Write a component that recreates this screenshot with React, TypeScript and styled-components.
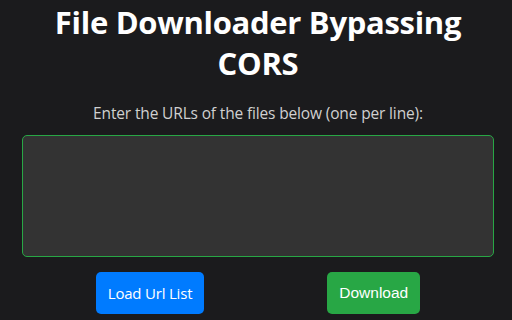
import React, { useState } from 'react';
import styled, { createGlobalStyle } from 'styled-components';

const GlobalStyle = createGlobalStyle`
  html, body {
    margin: 0;
    padding: 0;
    background-color: #1b1b1d;
  }
  body {
    font-family: "Open Sans", "Noto Sans", sans-serif;
    color: #fff;
  }
`;

const Page = styled.div`
  display: flex;
  flex-direction: column;
  align-items: center;
  padding: 0 18px 0 22px;
`;

const Title = styled.h1`
  margin: 2px 0 0;
  font-size: 31px;
  line-height: 41px;
  letter-spacing: -0.3px;
  font-weight: 700;
  text-align: center;
  color: #fff;
`;

const Hint = styled.p`
  margin: 18px 0 0;
  font-size: 15.5px;
  line-height: 22px;
  letter-spacing: -0.15px;
  color: #d0d0d0;
`;

const UrlBox = styled.textarea`
  box-sizing: border-box;
  width: 100%;
  height: 122px;
  margin-top: 11px;
  padding: 8px;
  background-color: #333333;
  color: #fff;
  border: 1px solid #28a745;
  border-radius: 5px;
  resize: none;
  outline: none;
  font-family: inherit;
  font-size: 14px;
`;

const ButtonRow = styled.div`
  display: flex;
  justify-content: center;
  gap: 123px;
  margin-top: 15px;
`;

const ActionButton = styled.button<{ tone: 'blue' | 'green' }>`
  height: 42px;
  padding: 0 12px;
  border: 0;
  border-radius: 5px;
  background-color: ${props => (props.tone === 'blue' ? '#007bff' : '#28a745')};
  color: #fff;
  font-size: ${props => (props.tone === 'blue' ? '15px' : '15.5px')};
  letter-spacing: ${props => (props.tone === 'blue' ? '-0.2px' : '0')};
  font-family: ${props => (props.tone === 'blue' ? '"Open Sans", sans-serif' : '"Liberation Sans", Arial, sans-serif')};
  cursor: pointer;
`;

const App: React.FC = () => {
  const [urls, setUrls] = useState<string>('');

  return (
    <>
      <GlobalStyle />
      <Page>
        <Title>File Downloader Bypassing CORS</Title>
        <Hint>Enter the URLs of the files below (one per line):</Hint>
        <UrlBox value={urls} onChange={e => setUrls(e.target.value)} />
        <ButtonRow>
          <ActionButton type="button" tone="blue">Load Url List</ActionButton>
          <ActionButton type="button" tone="green">Download</ActionButton>
        </ButtonRow>
      </Page>
    </>
  );
};

export default App;
